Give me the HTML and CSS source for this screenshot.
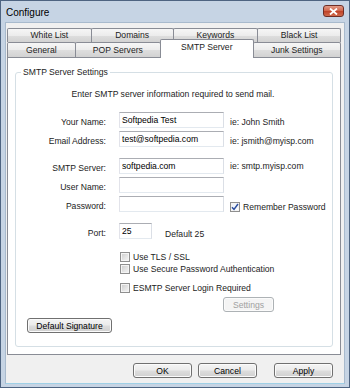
FILE: index.html
```html
<!DOCTYPE html>
<html lang="en">
<head>
    <meta charset="UTF-8">
    <title>Configure</title>
    <link rel="stylesheet" href="styles.css">
</head>
<body>
    <div class="window">
        <div class="titlebar">
            <span class="title">Configure</span>
            <span class="close">
                <svg width="9" height="7" viewBox="0 0 9 7"><path d="M1 0.5 L8 6.5 M8 0.5 L1 6.5" stroke="#ffffff" stroke-width="1.8"/></svg>
            </span>
        </div>
        <div class="client">
            <div class="tabs">
                <div class="tab-row back">
                    <div class="tab">White List</div>
                    <div class="tab">Domains</div>
                    <div class="tab">Keywords</div>
                    <div class="tab">Black List</div>
                </div>
                <div class="tab-row front">
                    <div class="tab">General</div>
                    <div class="tab">POP Servers</div>
                    <div class="tab active">SMTP Server</div>
                    <div class="tab">Junk Settings</div>
                </div>
            </div>
            <div class="panel">
                <fieldset class="group">
                    <legend>SMTP Server Settings</legend>
                    <p class="intro">Enter SMTP server information required to send mail.</p>

                    <div class="fields first">
                        <div class="field"><label>Your Name:</label><input class="text" type="text" value="Softpedia Test"><span class="hint">ie: John Smith</span></div>
                        <div class="field"><label>Email Address:</label><input class="text" type="text" value="test@softpedia.com"><span class="hint">ie: jsmith@myisp.com</span></div>
                    </div>
                    <div class="fields">
                        <div class="field"><label>SMTP Server:</label><input class="text" type="text" value="softpedia.com"><span class="hint up">ie: smtp.myisp.com</span></div>
                        <div class="field"><label>User Name:</label><input class="text" type="text" value=""></div>
                        <div class="field"><label>Password:</label><input class="text" type="password" value=""><span class="check-item hint"><span class="box checked"><svg width="8" height="8" viewBox="0 0 8 8"><path d="M1 4.2 L3 6.4 L7 1" stroke="#2a4d9f" stroke-width="1.5" fill="none"/></svg></span>Remember Password</span></div>
                    </div>
                    <div class="fields">
                        <div class="field"><label>Port:</label><input class="text port" type="text" value="25"><span class="default-port">Default 25</span></div>
                    </div>

                    <div class="options">
                        <div class="check-item"><span class="box"></span>Use TLS / SSL</div>
                        <div class="check-item"><span class="box"></span>Use Secure Password Authentication</div>
                        <div class="check-item esmtp"><span class="box"></span>ESMTP Server Login Required</div>
                        <button class="btn settings" disabled>Settings</button>
                    </div>

                    <button class="btn signature">Default Signature</button>
                </fieldset>
            </div>
            <div class="footer">
                <button class="btn">OK</button>
                <button class="btn">Cancel</button>
                <button class="btn apply">Apply</button>
            </div>
        </div>
    </div>
</body>
</html>
```

FILE: styles.css
```css
* {margin: 0; padding: 0; box-sizing: border-box;}
body {background-color: #ffffff; font-family: "Liberation Sans", Arial, sans-serif; font-size: 8.6px; color: #1c1c1c;}

/* window frame */
.window {width: 350px; height: 388px; border: 1px solid #4e6481; background-color: #c6d4e4; padding: 0 4px 3px 4px; display: flex; flex-direction: column;}
.titlebar {height: 21px; display: flex; align-items: center; justify-content: space-between; padding: 0 1px 0 1px;}
.titlebar .title {font-size: 10px; color: #000000; margin-top: 1px;}
.titlebar .close {width: 21px; height: 12px; margin-top: -1px; border: 1px solid #6e2e26; border-radius: 3px; background: linear-gradient(#e19a86 0%, #d2694f 45%, #c0442a 55%, #d06a4c 100%); display: flex; align-items: center; justify-content: center;}

.client {flex: 1; background-color: #f0f0f0; border: 1px solid #a8bacd; border-bottom-color: #9fd0e6; padding: 5px 3px 5px 1px; display: flex; flex-direction: column;}

/* tabs */
.tab-row {display: flex;}
.tab {height: 14px; border: 1px solid #898c95; border-bottom: none; border-radius: 2px 2px 0 0; background: linear-gradient(#f6f6f6 0%, #ececec 50%, #dedede 51%, #d2d2d2 100%); display: flex; align-items: center; justify-content: center; margin-left: -1px; white-space: nowrap;}
.tab:first-child {margin-left: 0;}
.tab-row.back .tab {padding-bottom: 1px;}
.tab-row.back .tab:nth-child(1) {width: 85px;}
.tab-row.back .tab:nth-child(2) {width: 83px;}
.tab-row.back .tab:nth-child(3) {width: 86px;}
.tab-row.back .tab:nth-child(4) {width: 84px;}
.tab-row.front .tab {height: 15px;}
.tab-row.front .tab:nth-child(1) {width: 69px;}
.tab-row.front .tab:nth-child(2) {width: 87px;}
.tab-row.front .tab:nth-child(3) {width: 94px;}
.tab-row.front .tab:nth-child(4) {width: 89px;}
.tab-row.front .tab.active {height: 19px; margin-top: -3px; margin-bottom: -1px; background: #ffffff; position: relative; z-index: 1; align-items: flex-start; padding-top: 2px;}

/* page panel */
.panel {height: 298px; background-color: #ffffff; border: 1px solid #898c95; padding: 9px 7px 0 7px;}
.group {border: 1px solid #d5dfe5; border-radius: 3px; padding: 0 0 13px 0;}
.group legend {margin-left: 5px; padding: 0 2px; line-height: 10px;}
.intro {text-align: center; line-height: 10px; margin-top: 12px; padding-right: 2px;}

.fields {display: flex; flex-direction: column; gap: 3px; margin-top: 11px;}
.fields.first {margin-top: 13px;}
.fields:last-of-type {margin-top: 10px;}
.field {display: flex; align-items: flex-end;}
.field label {width: 90px; margin-right: 13px; text-align: right; line-height: 10px; margin-bottom: 1px;}
.text {width: 105px; height: 16px; border: 1px solid #abadb3; border-color: #abadb3 #dbdfe6 #e3e9ef #e2e3ea; font-family: inherit; font-size: 8.6px; padding: 0 2px; color: #000000; background: #ffffff; outline: none;}
.text.port {width: 33px;}
.hint {margin-left: 6px; line-height: 10px; margin-bottom: 1px;}
.hint.up {margin-bottom: 3px;}
.default-port {margin-left: 13px; line-height: 10px; margin-bottom: 0;}

/* checkboxes */
.check-item {display: flex; align-items: center; gap: 3px; line-height: 10px; height: 11px;}
.box {width: 10px; height: 10px; border: 1px solid #8f8f8f; background: linear-gradient(135deg, #cbcbcb 0%, #e6e6e6 60%, #f6f6f6 100%); box-shadow: inset 0 0 0 1px #f4f4f4; display: flex; align-items: center; justify-content: center;}
.box.checked {background: linear-gradient(135deg, #e9eef6 0%, #ffffff 100%); border-color: #8f8f8f;}
.field .check-item {margin-bottom: 0;}

.options {margin: 12px 0 0 104px; display: flex; flex-direction: column; gap: 1px; align-items: flex-start;}
.options .esmtp {margin-top: 7px;}

/* buttons */
.btn {height: 15px; border: 1px solid #707070; border-radius: 3px; background: linear-gradient(#f4f4f4 0%, #ebebeb 48%, #dddddd 52%, #d0d0d0 100%); font-family: inherit; font-size: 8.6px; color: #000000; display: flex; align-items: center; justify-content: center; box-shadow: inset 0 0 0 1px #fbfbfb;}
.btn.settings {width: 51px; margin: 3px 0 0 103px; border-color: #adb2b5; background: #f4f4f4; color: #a0a0a0;}
.btn.signature {width: 85px; margin: 6px 0 0 11px;}

.footer {display: flex; justify-content: flex-end; gap: 6px; padding-right: 8px; margin-top: 8px;}
.footer .btn {width: 59px;}
.footer .btn.apply {margin-left: 11px;}
```
